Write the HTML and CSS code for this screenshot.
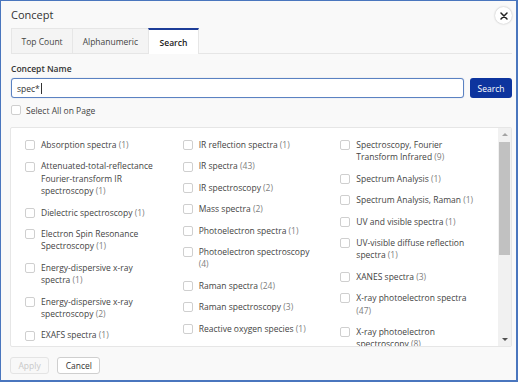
FILE: index.html
```html
<!DOCTYPE html>
<html lang="en">
<head>
<meta charset="utf-8">
<title>Concept</title>
<link rel="stylesheet" href="styles.css">
</head>
<body>
<div class="dialog">
  <div class="header">
    <h1 class="title">Concept</h1>
    <button class="close" aria-label="Close">
      <svg width="8" height="8" viewBox="0 0 8 8"><path d="M1 1L7 7M7 1L1 7" stroke="#222" stroke-width="1.5" stroke-linecap="round"/></svg>
    </button>
  </div>
  <div class="tabs">
    <div class="tab">Top Count</div>
    <div class="tab">Alphanumeric</div>
    <div class="tab active">Search</div>
  </div>
  <div class="search-section">
    <div class="field-label">Concept Name</div>
    <div class="search-row">
      <div class="input">spec*<span class="caret"></span></div>
      <button class="btn-primary">Search</button>
    </div>
    <div class="select-all"><span class="cb"></span><span>Select All on Page</span></div>
  </div>
  <div class="list-box">
    <div class="list-cols">
      <div class="col">
        <div class="item"><span class="cb"></span><span class="label">Absorption spectra <span class="count">(1)</span></span></div>
        <div class="item"><span class="cb"></span><span class="label">Attenuated-total-reflectance Fourier-transform IR spectroscopy <span class="count">(1)</span></span></div>
        <div class="item"><span class="cb"></span><span class="label">Dielectric spectroscopy <span class="count">(1)</span></span></div>
        <div class="item"><span class="cb"></span><span class="label">Electron Spin Resonance Spectroscopy <span class="count">(1)</span></span></div>
        <div class="item"><span class="cb"></span><span class="label">Energy-dispersive x-ray spectra <span class="count">(1)</span></span></div>
        <div class="item"><span class="cb"></span><span class="label">Energy-dispersive x-ray spectroscopy <span class="count">(2)</span></span></div>
        <div class="item"><span class="cb"></span><span class="label">EXAFS spectra <span class="count">(1)</span></span></div>
      </div>
      <div class="col">
        <div class="item"><span class="cb"></span><span class="label">IR reflection spectra <span class="count">(1)</span></span></div>
        <div class="item"><span class="cb"></span><span class="label">IR spectra <span class="count">(43)</span></span></div>
        <div class="item"><span class="cb"></span><span class="label">IR spectroscopy <span class="count">(2)</span></span></div>
        <div class="item"><span class="cb"></span><span class="label">Mass spectra <span class="count">(2)</span></span></div>
        <div class="item"><span class="cb"></span><span class="label">Photoelectron spectra <span class="count">(1)</span></span></div>
        <div class="item"><span class="cb"></span><span class="label">Photoelectron spectroscopy <span class="count">(4)</span></span></div>
        <div class="item"><span class="cb"></span><span class="label">Raman spectra <span class="count">(24)</span></span></div>
        <div class="item"><span class="cb"></span><span class="label">Raman spectroscopy <span class="count">(3)</span></span></div>
        <div class="item"><span class="cb"></span><span class="label">Reactive oxygen species <span class="count">(1)</span></span></div>
      </div>
      <div class="col">
        <div class="item"><span class="cb"></span><span class="label">Spectroscopy, Fourier Transform Infrared <span class="count">(9)</span></span></div>
        <div class="item"><span class="cb"></span><span class="label">Spectrum Analysis <span class="count">(1)</span></span></div>
        <div class="item"><span class="cb"></span><span class="label">Spectrum Analysis, Raman <span class="count">(1)</span></span></div>
        <div class="item"><span class="cb"></span><span class="label">UV and visible spectra <span class="count">(1)</span></span></div>
        <div class="item"><span class="cb"></span><span class="label">UV-visible diffuse reflection spectra <span class="count">(1)</span></span></div>
        <div class="item"><span class="cb"></span><span class="label">XANES spectra <span class="count">(3)</span></span></div>
        <div class="item"><span class="cb"></span><span class="label">X-ray photoelectron spectra <span class="count">(47)</span></span></div>
        <div class="item"><span class="cb"></span><span class="label">X-ray photoelectron spectroscopy <span class="count">(8)</span></span></div>
      </div>
    </div>
    <div class="scrollbar">
      <div class="sb-btn"><span class="arrow-up"></span></div>
      <div class="sb-track"><div class="sb-thumb"></div></div>
      <div class="sb-btn"><span class="arrow-down"></span></div>
    </div>
  </div>
  <div class="footer">
    <button class="btn disabled" disabled>Apply</button>
    <button class="btn">Cancel</button>
  </div>
</div>
</body>
</html>
```

FILE: styles.css
```css
* { box-sizing: border-box; }
html, body { margin: 0; padding: 0; }
body {
  width: 518px;
  height: 382px;
  font-family: "Open Sans", "Liberation Sans", sans-serif;
  font-size: 8.5px;
  color: #333;
  background: #fff;
}
.dialog {
  width: 518px;
  height: 382px;
  border-style: solid;
  border-color: #4a76be;
  border-width: 1px 2px 2px 1px;
  background: #f9f9f9;
  padding: 0 4px 0 9px;
  display: flex;
  flex-direction: column;
}
.header {
  height: 27px;
  display: flex;
  align-items: center;
  justify-content: space-between;
}
.title {
  margin: 0 0 0 1px;
  font-size: 11px;
  font-weight: 400;
  color: #333;
  line-height: 14px;
}
.close {
  width: 17px;
  height: 17px;
  border-radius: 50%;
  border: none;
  background: #fff;
  box-shadow: 0 0 2px rgba(0,0,0,0.3);
  padding: 0;
  display: flex;
  align-items: center;
  justify-content: center;
  margin-top: 2px;
}
.tabs {
  height: 26px;
  display: flex;
  border-bottom: 1px solid #e6e6e6;
  margin-left: 1px;
}
.tab {
  height: 25px;
  padding: 0 9.5px;
  display: flex;
  align-items: center;
  background: #f4f4f4;
  border: 1px solid #e6e6e6;
  border-bottom: none;
  color: #444;
  margin-right: -1px;
}
.tab.active {
  background: #fff;
  border-top: 2px solid #1d3d98;
  padding: 0 11px;
  color: #222;
  font-weight: 600;
  height: 26px;
  margin-bottom: -1px;
}
.search-section {
  padding-left: 1px;
}
.field-label {
  margin-top: 8px;
  line-height: 13px;
  font-weight: 600;
  color: #333;
}
.search-row {
  margin-top: 3px;
  display: flex;
  gap: 6px;
}
.input {
  flex: 1;
  height: 20px;
  background: #fff;
  border: 1px solid #5b82c2;
  border-radius: 3px;
  box-shadow: 0 0 1px rgba(70,110,190,0.5);
  display: flex;
  align-items: center;
  padding-left: 5px;
  color: #333;
  font-size: 8.5px;
}
.caret {
  display: inline-block;
  width: 1px;
  height: 11px;
  background: #333;
  margin-left: 1px;
}
.btn-primary {
  width: 42px;
  height: 20px;
  border: none;
  border-radius: 3px;
  background: #0d349e;
  color: #fff;
  font-family: inherit;
  font-size: 8.5px;
  padding: 0;
}
.select-all {
  margin-top: 6px;
  height: 12px;
  display: flex;
  align-items: center;
  gap: 5px;
  color: #444;
}
.cb {
  flex: none;
  width: 10px;
  height: 10px;
  border: 1px solid #cfcfcf;
  border-radius: 2px;
  background: #fff;
}
.list-box {
  margin-top: 11px;
  height: 220px;
  background: #fff;
  border: 1px solid #e6e6e6;
  border-radius: 2px;
  display: flex;
  overflow: hidden;
}
.list-cols {
  flex: 1;
  display: grid;
  grid-template-columns: repeat(3, 1fr);
  padding: 11px 0 0 14px;
  overflow: hidden;
}
.col {
  display: flex;
  flex-direction: column;
  gap: 9px;
}
.item {
  display: flex;
  gap: 6px;
  line-height: 12.4px;
  color: #444;
}
.item .cb {
  margin-top: 1.2px;
}
.label {
  width: 118px;
}
.count {
  color: #808080;
}
.scrollbar {
  width: 13px;
  background: #f1f1f1;
  display: flex;
  flex-direction: column;
}
.sb-btn {
  height: 13px;
  display: flex;
  align-items: center;
  justify-content: center;
}
.arrow-up {
  width: 0;
  height: 0;
  border-left: 3px solid transparent;
  border-right: 3px solid transparent;
  border-bottom: 3px solid #a3a3a3;
}
.arrow-down {
  width: 0;
  height: 0;
  border-left: 3px solid transparent;
  border-right: 3px solid transparent;
  border-top: 3px solid #505050;
}
.sb-track {
  flex: 1;
  padding: 1px 1px 0 1px;
}
.sb-thumb {
  height: 113px;
  background: #c1c1c1;
}
.footer {
  margin-top: 10px;
  display: flex;
  gap: 8px;
}
.btn {
  height: 17px;
  padding: 0 7.5px;
  border: 1px solid #cfcfcf;
  border-radius: 3px;
  background: #fff;
  color: #333;
  font-family: inherit;
  font-size: 8.5px;
}
.btn.disabled {
  color: #c8c8c8;
  border-color: #e4e4e4;
  background: #f8f8f8;
}
```
